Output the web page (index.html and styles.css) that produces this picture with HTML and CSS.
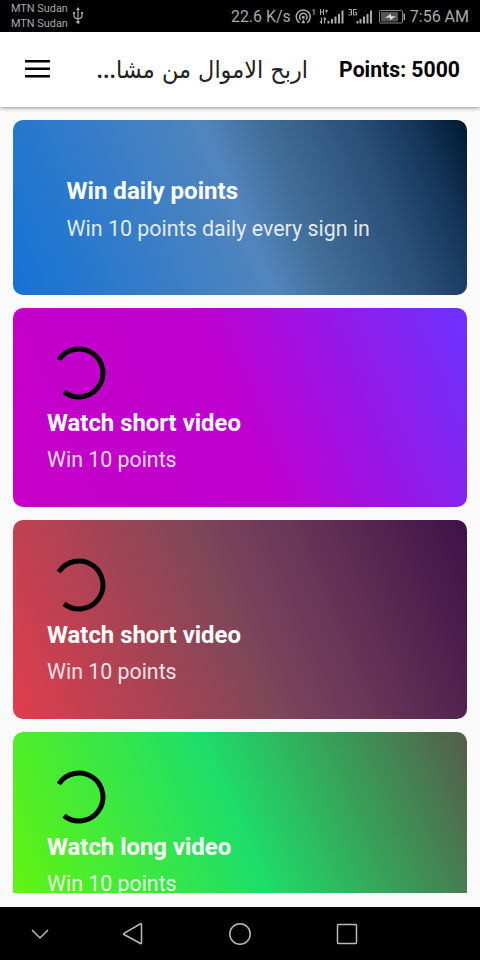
FILE: index.html
```html
<!DOCTYPE html>
<html lang="en">
<head>
<meta charset="utf-8">
<title>Points</title>
<link rel="stylesheet" href="styles.css">
</head>
<body>
<div class="status">
  <div class="carriers"><span>MTN Sudan</span><span>MTN Sudan</span></div>
  <svg class="usb" width="12" height="18" viewBox="0 0 12 18" fill="none" stroke="#aaa" stroke-width="1.2"><path d="M6 2v13M2 6v3q0 2 4 3M10 6v3q0 2-4 3"/><path d="M6 0l2 3H4zM1 5h2v2H1zM9 5h2v2H9zM4.500 14h3v2.500h-3z" fill="#aaa" stroke="none"/></svg>
  <span class="speed">22.6 K/s</span>
  <svg class="signals" width="110" height="24" viewBox="0 0 110 24" fill="none" stroke="#aaa">
    <g stroke-width="1.5"><path d="M4.500 18.800a7 7 0 1 1 7.500 0"/><path d="M5.800 15.800a3.700 3.700 0 1 1 5 0"/></g>
    <circle cx="8.300" cy="13.300" r="1.500" fill="#aaa" stroke="none"/><path d="M6.300 19.300l2-4 2 4z" fill="#aaa" stroke="none"/>
    <path d="M17.500 6.500l1.500-1v5.500" stroke-width="1"/>
    <path d="M25.500 5v6M28.500 5v6M25.500 8h3M30 7h3M31.500 5.500v3" stroke-width="1"/>
    <path d="M26.500 13.500v5.500l-1.500-1.500M29.500 19.500v-5.500l1.500 1.500" stroke-width="1.200"/>
    <g stroke-width="2"><path d="M33.500 17v2.500M37 15v4.500M40.500 12.500v7M44 10v9.500M47.500 6.500v13"/><path d="M62.500 17v2.500M65.500 15v4.500M69 12.500v7M72.500 10v9.500M76 6.500v13"/></g>
    <path d="M53.500 5.500h3v5.500h-3M54.500 8.200h2M61.500 5.500h-3v5.500h3v-2.500h-1.500" stroke-width="1"/>
    <rect x="84.500" y="6.500" width="23" height="12.500" rx="1" stroke="#888"/><rect x="86" y="8" width="17" height="9.500" fill="#555" stroke="none"/><path d="M109.300 9.500v6.500" stroke-width="1.400"/>
    <path d="M90 13.800l6-4v2.500h5l-6 4v-2.500z" fill="#ddd" stroke="none"/>
  </svg>
  <span class="time">7:56 AM</span>
</div>
<header class="appbar">
  <svg class="menu" width="25" height="18" viewBox="0 0 25 18" fill="#000"><path d="M0 0h25v2.500H0zM0 7.500h25v2.500H0zM0 15h25v2.500H0z"/></svg>
  <h1 class="title" dir="rtl" lang="ar">اربح الاموال من مشا<b>...</b></h1>
  <div class="points">Points: 5000</div>
</header>
<main class="list">
  <section class="card daily"><h2>Win daily points</h2><p>Win 10 points daily every sign in</p></section>
  <section class="card purple"><svg class="ring" viewBox="0 0 54 54"><path d="M6.800 14A24 24 0 1 1 12 45.700"/></svg><h2>Watch short video</h2><p>Win 10 points</p></section>
  <section class="card red"><svg class="ring" viewBox="0 0 54 54"><path d="M6.800 14A24 24 0 1 1 12 45.700"/></svg><h2>Watch short video</h2><p>Win 10 points</p></section>
  <section class="card green"><svg class="ring" viewBox="0 0 54 54"><path d="M6.800 14A24 24 0 1 1 12 45.700"/></svg><h2>Watch long video</h2><p>Win 10 points</p></section>
</main>
<nav class="nav">
  <svg width="24" height="24" viewBox="0 0 24 24"><path d="M4 8l8 8 8-8"/></svg>
  <svg width="24" height="24" viewBox="0 0 24 24"><path d="M20.500 2.500v18.500q0 1-1 .500L3 12.500q-.8-.6 0-1.200L19.500 1.800q1-.4 1 .7z"/></svg>
  <svg width="24" height="24" viewBox="0 0 24 24"><circle cx="12" cy="12" r="10.200"/></svg>
  <svg width="24" height="24" viewBox="0 0 24 24"><rect x="2.500" y="2.500" width="19" height="19" rx="1"/></svg>
</nav>
</body>
</html>
```
FILE: styles.css
```css
* { box-sizing: border-box; margin: 0; }
body { width: 480px; height: 960px; overflow: hidden; display: flex; flex-direction: column; background: #fafafa; font-family: Roboto, sans-serif; }
svg { display: block; flex: none; }

.status { height: 32px; flex: none; background: #000; color: #aaa; display: flex; align-items: center; padding: 0 11px; white-space: nowrap; }
.carriers { display: flex; flex-direction: column; width: 57px; font-size: 10.900px; line-height: 14.500px; padding-top: 1px; }
.usb { margin-left: 4px; }
.speed { margin-left: 147px; width: 64px; font-size: 15.900px; }
.signals { margin-top: 0; }
.time { margin-left: auto; font-size: 16px; }

.appbar { height: 75px; flex: none; background: #fff; display: flex; align-items: center; padding: 0 20px 0 25px; box-shadow: 0 1px 4px rgba(0, 0, 0, .4); z-index: 1; }
.menu { margin-top: -1px; }
.title { margin-left: 46px; width: 212px; font: 400 24px/36px "DejaVu Sans", sans-serif; color: #222; white-space: nowrap; transform: scaleX(.933); transform-origin: right; }
.title b { font-family: Roboto, sans-serif; }
.points { margin-left: auto; font-size: 21.200px; font-weight: 700; color: #000; white-space: nowrap; }

.list { height: 786px; flex: none; overflow: hidden; padding: 13px 13px 0; display: flex; flex-direction: column; gap: 13.300px; }
.card { width: 453.500px; height: 198.700px; flex: none; border-radius: 10px; padding: 38.500px 34px 0; color: #fff; }
.card h2 { font-size: 23.900px; line-height: 28px; font-weight: 700; white-space: nowrap; }
.card p { margin-top: 10.500px; font-size: 21.350px; line-height: 26px; color: rgba(255, 255, 255, .87); white-space: nowrap; }
.ring { width: 54px; height: 54px; margin: 0 0 8.500px 4.500px; fill: none; stroke: #000; stroke-width: 5; }
.daily { height: 174.700px; padding: 57px 53.500px 0; background: linear-gradient(67deg, #1472d5 0%, #5285bc 50%, #416e97 61%, #2b507a 78%, #17375c 89%, #00182f 100%); }
.daily h2 { font-size: 24.050px; }
.daily p { font-size: 21.450px; }
.purple { background: linear-gradient(67deg, #c600c6 0%, #bd00d0 50%, #6b33ff 100%); }
.red { background: linear-gradient(67deg, #e13d4e 0%, #804759 48%, #6d3959 64%, #3d1247 100%); }
.green { background: linear-gradient(67deg, #66f50b 0%, #1ede69 50%, #555c49 100%); }

.nav { height: 53px; flex: none; margin-top: 14px; background: #000; display: flex; align-items: center; padding-left: 28px; }
.nav svg { fill: none; stroke: #bbb; stroke-width: 1.500; }
.nav svg + svg { margin-left: 69px; }
.nav svg + svg + svg { margin-left: 83px; }
```
